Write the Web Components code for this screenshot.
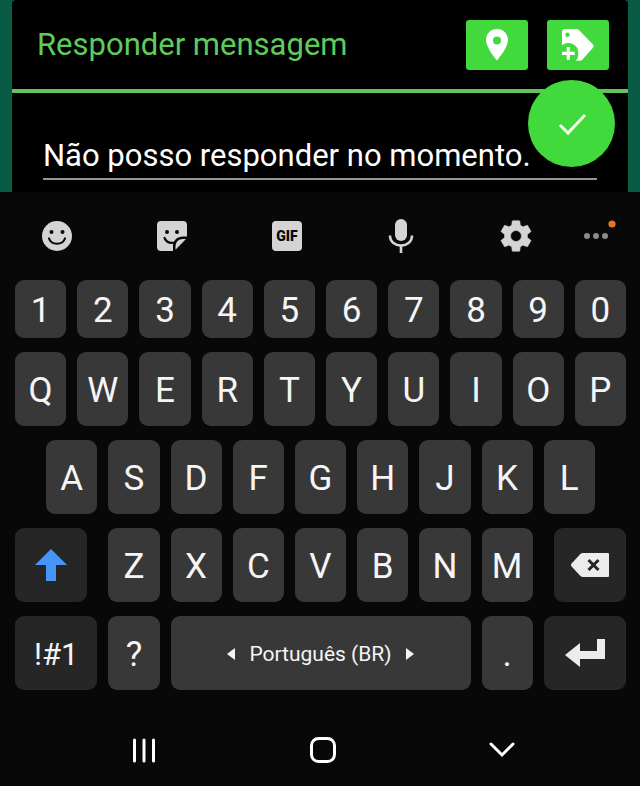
<!DOCTYPE html>
<html lang="pt-BR">
<head>
  <meta charset="utf-8">
  <meta name="viewport" content="width=device-width, initial-scale=1">
  <title>Responder mensagem</title>
  <style>
    body {
      margin: 0;
      background: #080808;
      font-family: Roboto, "Liberation Sans", sans-serif;
      --color-accent: #41d93b;
      --color-title: #5fcb5d;
      --color-line: #62c35b;
      --color-key: #383838;
      --color-key-dark: #262626;
      --color-icon: #d4d4d4;
    }
  </style>
</head>
<body>
  <phone-screen>
    <reply-dialog heading="Responder mensagem" message="Não posso responder no momento."></reply-dialog>
    <keyboard-toolbar></keyboard-toolbar>
    <soft-keyboard></soft-keyboard>
    <nav-bar></nav-bar>
  </phone-screen>

  <script>
    class PhoneScreen extends HTMLElement {
      constructor() {
        super();
        this.attachShadow({mode: 'open'});
        this.shadowRoot.innerHTML = `
          <style>
            :host {
              display: flex;
              flex-direction: column;
              min-height: 100vh;
              background: #080808;
            }
          </style>
          <slot></slot>
        `;
      }
    }

    class IconButton extends HTMLElement {
      constructor() {
        super();
        this.attachShadow({mode: 'open'});
        this.shadowRoot.innerHTML = `
          <style>
            :host {
              display: block;
            }

            button {
              display: flex;
              align-items: center;
              justify-content: center;
              width: 100%;
              height: 100%;
              padding: 0;
              border: none;
              border-radius: inherit;
              background: transparent;
              color: inherit;
            }
          </style>
          <button type="button" aria-label="${this.getAttribute('label')}"><slot></slot></button>
        `;
      }
    }

    class ReplyDialog extends HTMLElement {
      constructor() {
        super();
        this.attachShadow({mode: 'open'});
        this.shadowRoot.innerHTML = `
          <style>
            :host {
              display: block;
              padding: 0 12px;
              background: #0a5b46;
            }

            section {
              position: relative;
              background: #000;
              border-radius: 4px 4px 0 0;
            }

            header {
              display: flex;
              align-items: center;
              gap: 19px;
              height: 89px;
              padding: 0 19px 0 25px;
              border-bottom: 4px solid var(--color-line);
            }

            h1 {
              flex: 1;
              margin: 0;
              color: var(--color-title);
              font-size: 31px;
              font-weight: 400;
              line-height: 40px;
            }

            .tool {
              width: 62px;
              height: 50px;
              border-radius: 3px;
              background: var(--color-accent);
              color: #fff;
            }

            .field {
              display: block;
              padding: 43px 31px 12px;
            }

            input {
              display: block;
              width: 100%;
              height: 44px;
              box-sizing: border-box;
              padding: 0 0 4px;
              border: none;
              border-bottom: 2px solid #969696;
              outline: none;
              background: transparent;
              color: #fff;
              font-family: inherit;
              font-size: 31px;
            }

            .confirm {
              position: absolute;
              top: 80px;
              right: 13px;
              width: 87px;
              height: 87px;
              border-radius: 50%;
              background: var(--color-accent);
              color: #f0ffe8;
            }
          </style>
          <section>
            <header>
              <h1>${this.getAttribute('heading')}</h1>
              <icon-button class="tool" label="Localização">
                <svg width="24" height="32" viewBox="0 0 24 32" fill="currentColor"><path fill-rule="evenodd" d="M12 0C5.600 0 1 4.800 1 11c0 8 11 20.500 11 20.500S23 19 23 11C23 4.800 18.400 0 12 0zm0 7.500a4 4 0 1 1 0 8 4 4 0 0 1 0-8z"/></svg>
              </icon-button>
              <icon-button class="tool" label="Adicionar etiqueta">
                <svg width="34" height="34" viewBox="0 0 34 34" fill="currentColor"><path fill-rule="evenodd" d="M4 1h11c1.500 0 2.500.5 3.400 1.500L32 16.500c.8 1 .8 2.200 0 3.200L21.500 31.500c-1 1-2 1.300-4 1.300h-2.800A10 10 0 0 0 17.300 25 10 10 0 0 0 1 17.300V4a3 3 0 0 1 3-3zm2.500 3.500a2.200 2.200 0 1 0 0 4.400 2.200 2.200 0 0 0 0-4.400z"/><path d="M5.700 19h3.200v4.700h4.800v3.200H8.900v4.800H5.700v-4.800H1v-3.200h4.700z"/></svg>
              </icon-button>
            </header>
            <label class="field"><input type="text" aria-label="Mensagem" value="${this.getAttribute('message')}"></label>
            <icon-button class="confirm" label="Confirmar">
              <svg width="30" height="24" viewBox="0 0 30 24" fill="none" stroke="currentColor" stroke-width="3"><path d="M3 13l8 8L28 3"/></svg>
            </icon-button>
          </section>
        `;
      }
    }

    class KeyboardToolbar extends HTMLElement {
      constructor() {
        super();
        this.attachShadow({mode: 'open'});
        this.shadowRoot.innerHTML = `
          <style>
            :host {
              display: grid;
              grid-template-columns: repeat(5, 5fr) 2fr;
              height: 88px;
              padding-right: 21px;
              color: var(--color-icon);
            }
          </style>
          <icon-button label="Emojis">
            <svg width="30" height="30" viewBox="0 0 30 30"><circle cx="15" cy="15" r="15" fill="currentColor"/><circle cx="9.500" cy="11" r="2" fill="#080808"/><circle cx="20.500" cy="11" r="2" fill="#080808"/><path d="M7 17.500c2.500 7 13.500 7 16 0" fill="none" stroke="#080808" stroke-width="2.200" stroke-linecap="round"/></svg>
          </icon-button>
          <icon-button label="Figurinhas">
            <svg width="30" height="30" viewBox="0 0 30 30"><path d="M4 0h22a4 4 0 0 1 4 4v11.500h-4c-6 0-10 4-10 10V30H4a4 4 0 0 1-4-4V4a4 4 0 0 1 4-4z" fill="currentColor"/><path d="M29 18L18.500 28.800v-3.300c0-4.500 3-7.500 7.500-7.500z" fill="currentColor"/><circle cx="10" cy="11" r="2" fill="#080808"/><circle cx="20" cy="11" r="2" fill="#080808"/><path d="M7.500 17c2 4.500 6 5.500 10.500 4.500" fill="none" stroke="#080808" stroke-width="2.200" stroke-linecap="round"/></svg>
          </icon-button>
          <icon-button label="GIF">
            <svg width="30" height="30" viewBox="0 0 30 30"><rect width="30" height="30" rx="4" fill="currentColor"/><text x="15" y="20" text-anchor="middle" font-family="Roboto, sans-serif" font-size="14" font-weight="900" fill="#080808">GIF</text></svg>
          </icon-button>
          <icon-button label="Entrada de voz">
            <svg width="26" height="34" viewBox="0 0 26 34"><rect x="7" y="0" width="12" height="22" rx="6" fill="currentColor"/><path d="M2 16.500c0 13.500 22 13.500 22 0M13 27v7" fill="none" stroke="currentColor" stroke-width="2.600"/></svg>
          </icon-button>
          <icon-button label="Configurações">
            <svg width="32" height="32" viewBox="2 2 20 20" fill="currentColor" stroke="currentColor" stroke-width=".3"><path d="M19.140 12.940c.040-.300.060-.610.060-.940s-.020-.640-.070-.940l2.030-1.580c.180-.140.230-.410.120-.610l-1.920-3.320c-.120-.220-.370-.290-.590-.220l-2.390.960c-.500-.380-1.030-.700-1.620-.940l-.360-2.540c-.040-.240-.240-.410-.480-.410h-3.840c-.240 0-.430.170-.470.410l-.360 2.540c-.590.240-1.130.570-1.620.940l-2.390-.960c-.220-.080-.470 0-.590.220L2.740 8.870c-.120.210-.080.470.120.610l2.030 1.580c-.050.300-.090.630-.090.940s.020.640.070.940l-2.030 1.580c-.180.140-.230.410-.120.610l1.920 3.320c.120.220.370.290.590.220l2.390-.960c.500.380 1.030.700 1.620.940l.360 2.540c.050.240.240.410.480.410h3.840c.240 0 .440-.170.470-.410l.360-2.540c.590-.240 1.130-.560 1.620-.940l2.390.960c.220.080.470 0 .590-.220l1.920-3.320c.120-.220.070-.470-.120-.610zM12 15.400a3.400 3.400 0 1 1 0-6.800 3.400 3.400 0 0 1 0 6.800z"/></svg>
          </icon-button>
          <icon-button label="Mais opções">
            <svg width="40" height="32" viewBox="0 0 40 32" fill="#8c8c8c"><circle cx="11" cy="16" r="3"/><circle cx="20" cy="16" r="3"/><circle cx="29" cy="16" r="3"/><circle cx="36" cy="4" r="3.600" fill="#e87329"/></svg>
          </icon-button>
        `;
      }
    }

    class KeyCap extends HTMLElement {
      constructor() {
        super();
        this.attachShadow({mode: 'open'});
        const label = this.getAttribute('label');
        this.shadowRoot.innerHTML = `
          <style>
            :host {
              display: block;
              grid-column: span 2;
              margin: 0 5px 0 6px;
              font-size: 35px;
            }

            :host([offset]) {
              grid-column: 2 / span 2;
            }

            :host([size="wide"]) {
              grid-column: span 3;
              font-size: 31px;
            }

            :host([size="space"]) {
              grid-column: span 10;
              font-size: 21px;
            }

            :host([inset="end"]) {
              margin-right: 15px;
            }

            :host([inset="start"]) {
              margin-left: 16px;
            }

            button {
              display: flex;
              align-items: center;
              justify-content: center;
              gap: 14px;
              width: 100%;
              height: 100%;
              padding: 2px 0 0;
              border: none;
              border-radius: 9px;
              background: var(--color-key);
              color: #f5f5f5;
              font: inherit;
            }

            :host([dark]) button {
              background: var(--color-key-dark);
            }

            :host([label]) button {
              padding: 0;
            }
          </style>
          <button type="button"${label ? ` aria-label="${label}"` : ''}><slot></slot></button>
        `;
      }
    }

    class SoftKeyboard extends HTMLElement {
      constructor() {
        super();
        this.attachShadow({mode: 'open'});
        this.shadowRoot.innerHTML = `
          <style>
            :host {
              display: grid;
              grid-template-rows: 58px;
              grid-auto-rows: 74px;
              gap: 14px;
              padding: 0 9px;
            }

            .row {
              display: grid;
              grid-template-columns: repeat(20, minmax(0, 1fr));
            }
          </style>
          <div class="row">${this.keys('1234567890')}</div>
          <div class="row">${this.keys('QWERTYUIOP')}</div>
          <div class="row"><key-cap offset>A</key-cap>${this.keys('SDFGHJKL')}</div>
          <div class="row">
            <key-cap size="wide" inset="end" dark label="Maiúsculas">
              <svg width="32" height="32" viewBox="0 0 32 32" fill="#4595fa"><path d="M16 0l16 16H21v16H11V16H0z"/></svg>
            </key-cap>
            ${this.keys('ZXCVBNM')}
            <key-cap size="wide" inset="start" dark label="Apagar">
              <svg width="38" height="24" viewBox="0 0 38 24"><path d="M12 0h25a1 1 0 0 1 1 1v22a1 1 0 0 1-1 1H12c-1 0-2-.4-2.800-1.200L.6 13.500c-.8-1-.8-2 0-3L9.200 1.200C10 .4 11 0 12 0z" fill="#ececec"/><path d="M17.500 7l10 10m0-10l-10 10" stroke="#262626" stroke-width="3"/></svg>
            </key-cap>
          </div>
          <div class="row">
            <key-cap size="wide" dark>!#1</key-cap>
            <key-cap>?</key-cap>
            <key-cap size="space">
              <svg width="8" height="12" viewBox="0 0 8 12" fill="#f5f5f5"><path d="M8 0v12L0 6z"/></svg>
              <span>Português (BR)</span>
              <svg width="8" height="12" viewBox="0 0 8 12" fill="#f5f5f5"><path d="M0 0v12l8-6z"/></svg>
            </key-cap>
            <key-cap>.</key-cap>
            <key-cap size="wide" dark label="Enter">
              <svg width="40" height="28" viewBox="0 0 40 28" fill="#ececec"><path d="M32 0h8v20H15v8L0 16 15 4v8h17z"/></svg>
            </key-cap>
          </div>
        `;
      }

      keys(letters) {
        return [...letters].map((letter) => `<key-cap>${letter}</key-cap>`).join('');
      }
    }

    class NavBar extends HTMLElement {
      constructor() {
        super();
        this.attachShadow({mode: 'open'});
        this.shadowRoot.innerHTML = `
          <style>
            :host {
              display: grid;
              grid-template-columns: repeat(3, 1fr);
              height: 72px;
              padding: 24px 48px 0 54px;
              color: #fff;
            }
          </style>
          <icon-button label="Recentes">
            <svg width="24" height="26" viewBox="0 0 24 26" fill="none" stroke="currentColor" stroke-width="3" stroke-linecap="round"><path d="M2.500 3v21M12 3v21M21.500 3v21"/></svg>
          </icon-button>
          <icon-button label="Início">
            <svg width="28" height="28" viewBox="0 0 28 28" fill="none" stroke="currentColor" stroke-width="3"><rect x="2.500" y="2.500" width="23" height="23" rx="7"/></svg>
          </icon-button>
          <icon-button label="Ocultar teclado">
            <svg width="26" height="16" viewBox="0 0 26 16" fill="none" stroke="currentColor" stroke-width="3" stroke-linecap="round"><path d="M2 2l11 11L24 2"/></svg>
          </icon-button>
        `;
      }
    }

    customElements.define('icon-button', IconButton);
    customElements.define('key-cap', KeyCap);
    customElements.define('reply-dialog', ReplyDialog);
    customElements.define('keyboard-toolbar', KeyboardToolbar);
    customElements.define('soft-keyboard', SoftKeyboard);
    customElements.define('nav-bar', NavBar);
    customElements.define('phone-screen', PhoneScreen);
  </script>
</body>
</html>
